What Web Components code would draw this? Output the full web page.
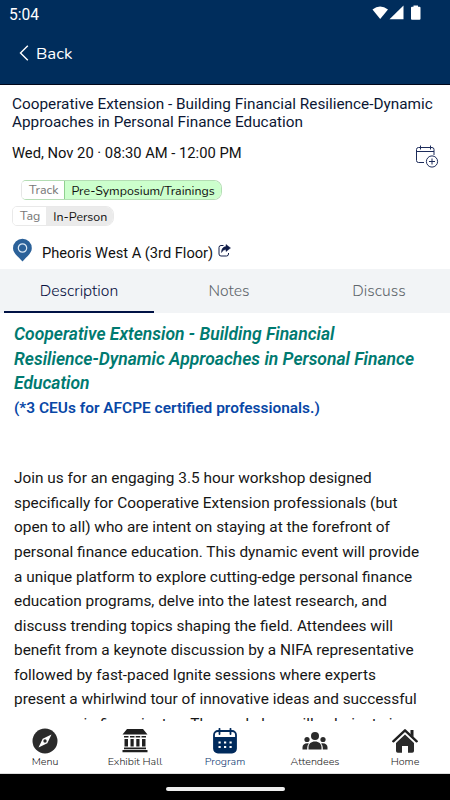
<!DOCTYPE html>
<html lang="en">
<head>
<meta charset="utf-8">
<meta name="viewport" content="width=device-width, initial-scale=1">
<title>Session</title>
<style>
  html, body { margin: 0; height: 100%; background: #fff; }
  body { font-family: Roboto, "Liberation Sans", sans-serif; --navy: #002d5c; --round: Nunito, Lato, sans-serif; }
</style>
</head>
<body>
<session-page></session-page>

<script>
const ICONS = {
  compass: `<svg width="26" height="26" viewBox="0 0 26 26"><circle cx="13" cy="13" r="12.5" fill="#2b2b2b"/><path d="M19.5 6.5 15.3 15.3 6.5 19.5 10.7 10.7Z" fill="#fff"/><circle cx="13" cy="13" r="1.7" fill="#2b2b2b"/></svg>`,
  hall: `<svg width="26" height="26" viewBox="0 0 26 26" fill="#1f1f1f"><path d="M5 1h16L25.5 6.500H.5ZM2 8h4.500v1.500H2ZM8 8h4.500v1.500H8ZM13.700 8h4.500v1.500h-4.500ZM19.500 8H24v1.500h-4.500ZM2.500 11h3.500v7.500H2.500ZM8.500 11h3.200v7.500h-3.200ZM14.300 11h3.200v7.500h-3.200ZM20 11h3.500v7.500h-3.500ZM2 19.500h22v1.700H2ZM.5 22h25v2.300H.5Z"/></svg>`,
  calendar: `<svg width="26" height="26" viewBox="0 0 26 26"><rect x="2" y="3" width="22" height="21.5" rx="4" fill="#fff" stroke="#002a5c" stroke-width="1.800"/><path d="M2 9h22v12a3.500 3.500 0 0 1-3.500 3.500h-15A3.500 3.500 0 0 1 2 21Z" fill="#002a5c"/><path d="M7.500 .8v5.200M18.500 .8v5.200" stroke="#002a5c" stroke-width="1.800" stroke-linecap="round"/><path d="M6.500 14.500h2.200M12 14.500h2.200M17.500 14.500h2.200M6.500 19h2.200M12 19h2.200M17.500 19h2.200" stroke="#fff" stroke-width="2"/></svg>`,
  people: `<svg width="26" height="26" viewBox="0 0 26 26" fill="#2b2b2b"><circle cx="13" cy="8" r="4"/><circle cx="5" cy="11.500" r="2.600"/><circle cx="21" cy="11.500" r="2.600"/><path d="M6.500 21.500v-2.200c0-3.500 2.600-5.800 6.500-5.800s6.500 2.300 6.500 5.800v2.200ZM.5 21.500v-2.200C.5 17 2.200 15.200 5.500 15.200q.8 0 1.400.2Q5.200 17.200 5.200 19.700v1.800ZM25.500 21.500v-2.200c0-2.300-1.700-4.100-5-4.100q-.8 0-1.400.2 1.700 1.800 1.700 4.300v1.800Z"/></svg>`,
  house: `<svg width="26" height="26" viewBox="0 0 26 26"><path d="M1.300 13.300 13 2.300 24.700 13.300" fill="none" stroke="#1f1f1f" stroke-width="2.400" stroke-linecap="round" stroke-linejoin="round"/><path d="M18.500 2H21.500v7l-3-2.800Z" fill="#1f1f1f"/><path d="M13 6.600 22 15v8a1.800 1.800 0 0 1-1.800 1.800H16V18h-6v6.800H5.800A1.800 1.800 0 0 1 4 23v-8Z" fill="#2b2b2b"/></svg>`,
};

function define(name, html) {
  const tpl = document.createElement("template");
  tpl.innerHTML = html;
  customElements.define(name, class extends HTMLElement {
    constructor() {
      super();
      this.attachShadow({ mode: "open" }).appendChild(tpl.content.cloneNode(true));
    }
  });
}

// Status bar and back link
define("app-header", `
  <style>
    :host { display: flex; flex-direction: column; height: 84px; flex: none; background: var(--navy); color: #fff; border-bottom: 1px solid #00061a; }
    .status { display: flex; justify-content: space-between; align-items: center; height: 28px; padding: 0 29px 0 9px; font-size: 15.6px; }
    .status svg { display: block; margin-top: -3px; }
    .status span { margin-top: 1px; }
    .back { display: flex; align-items: center; gap: 7px; height: 50px; padding-left: 19px; font: 400 16.800px var(--round); }
  </style>
  <div class="status">
    <span>5:04</span>
    <svg width="49" height="16" viewBox="0 0 49 16" fill="#fff"><path d="M.5 4.500Q8 -1.500 16 4.500L8.200 14Z"/><path d="M17.500 14.300 31.500.5v13.800Z"/><path d="M41.500.5h4.500v1.300h1.500q1 0 1 1v11q0 1-1 1h-7.500q-1 0-1-1v-11q0-1 1-1h1.500Z"/></svg>
  </div>
  <div class="back">
    <svg width="10" height="16" viewBox="0 0 10 16"><path d="M8.800.8 1.500 8l7.300 7.200" fill="none" stroke="#fff" stroke-width="1.400"/></svg>
    <slot></slot>
  </div>
`);

define("label-chip", `
  <style>
    :host { display: flex; align-items: stretch; width: max-content; box-sizing: border-box; border: 1px solid var(--edge, #e9e9e9); border-radius: 5px 8px 8px 5px; font: 400 12.400px/17px var(--round); overflow: hidden; }
    .key { color: #777; padding: 0 6px 0 7px; background: #fff; }
    .value { background: var(--fill, #ebebeb); color: #111; border: 0 solid var(--line, #ebebeb); border-left-width: 1px; padding: 1px 6px 0; letter-spacing: var(--track, 0); }
  </style>
  <span class="key"><slot name="key"></slot></span><span class="value"><slot></slot></span>
`);

define("session-summary", `
  <style>
    :host { display: block; box-sizing: border-box; height: 184px; flex: none; padding: 10px 11px 0 12px; color: #111; }
    h1 { margin: 0; font-size: 15.340px; line-height: 18px; font-weight: 400; color: #0c1734; white-space: nowrap; }
    .when { display: flex; justify-content: space-between; align-items: center; height: 24px; margin-top: 12px; font-size: 14.740px; }
    .when svg { margin-top: 2px; }
    .when span { margin-top: -4px; }
    .chips { display: flex; flex-direction: column; gap: 6px; margin-top: 13px; }
    .track { --edge: #b4ddb4; --fill: #ccffcc; --line: #8fd08f; margin-left: 9px; border-left-color: #e6e6e6; }
    .where { display: flex; align-items: center; margin-top: 12px; height: 24px; font-size: 14.650px; }
    .where span { margin: 5px 5px 0 10px; }
  </style>
  <h1>Cooperative Extension - Building Financial Resilience-Dynamic<br>Approaches in Personal Finance Education</h1>
  <div class="when">
    <span>Wed, Nov 20 · 08:30 AM - 12:00 PM</span>
    <svg width="24" height="23" viewBox="0 0 24 23" fill="none" stroke="#1c2b5a"><path d="M9 17.500H3.500Q1.500 17.500 1.500 15.500V4.500Q1.500 2.500 3.500 2.500H17q2 0 2 2V10M1.500 6.500H19M5.500 .5v4M15.500 .5v4"/><circle cx="17" cy="16.500" r="5.600" fill="#fff"/><path d="M17 13.500v6M14 16.500h6"/></svg>
  </div>
  <div class="chips">
    <label-chip class="track"><span slot="key">Track</span>Pre-Symposium/Trainings</label-chip>
    <label-chip><span slot="key">Tag</span>In-Person</label-chip>
  </div>
  <div class="where">
    <svg width="20" height="24" viewBox="0 0 20 24"><path d="M10.500.7a9.500 9.500 0 0 1 9.300 9.500c0 5.300-6 9.200-9.300 13.300C7.200 19.400 1 15.500 1 10.200A9.500 9.500 0 0 1 10.500.7Z" fill="#2b6199"/><circle cx="10.500" cy="10" r="4.200" fill="none" stroke="#dce9f5" stroke-width="1.200"/></svg>
    <span>Pheoris West A (3rd Floor)</span>
    <svg width="13" height="13" viewBox="0 0 13 13" fill="none" stroke="#101c48"><path d="M5.500 1.500H3Q1 1.500 1 3.500V10q0 2 2 2H8.500q2 0 2-2V9"/><path d="M8 .5 12.500 4 8 7.500V5.500Q5 5.200 3.500 8.500 3.500 3 8 2.600Z" fill="#101c48" stroke-width=".5"/></svg>
  </div>
`);

define("session-tabs", `
  <style>
    :host { display: flex; flex: none; height: 44px; background: #f2f4f6; padding-left: 4px; font: 300 15.700px/44px var(--round); color: #5f666c; box-sizing: border-box; text-align: center; overflow: hidden; }
    ::slotted(*) { flex: 0 0 150px; height: 44px; box-sizing: border-box; border-bottom: 2px solid transparent; }
    ::slotted([active]) { color: #060f40; border-color: #001245; }
  </style>
  <slot></slot>
`);

define("session-description", `
  <style>
    :host { display: block; flex: 1; min-height: 0; overflow: hidden; padding: 9px 14px 0; font-size: 15.380px; line-height: 24.560px; color: #161616; white-space: nowrap; }
    h2 { margin: 0; font-size: 17.500px; line-height: inherit; font-style: italic; font-weight: 600; color: #007a70; }
    strong { display: block; font-weight: 600; font-size: 15.450px; color: #0847a6; }
    p { margin: 46px 0 0; }
  </style>
  <h2>Cooperative Extension - Building Financial<br>Resilience-Dynamic Approaches in Personal Finance<br>Education</h2>
  <strong>(*3 CEUs for AFCPE certified professionals.)</strong>
  <p>Join us for an engaging 3.5 hour workshop designed<br>specifically for Cooperative Extension professionals (but<br>open to all) who are intent on staying at the forefront of<br>personal finance education. This dynamic event will provide<br>a unique platform to explore cutting-edge personal finance<br>education programs, delve into the latest research, and<br>discuss trending topics shaping the field. Attendees will<br>benefit from a keynote discussion by a NIFA representative<br>followed by fast-paced Ignite sessions where experts<br>present a whirlwind tour of innovative ideas and successful<br>programs in five minutes. The workshop will culminate in</p>
`);

class NavItem extends HTMLElement {
  constructor() {
    super();
    this.attachShadow({ mode: "open" });
  }

  connectedCallback() {
    this.shadowRoot.innerHTML = `
      <style>
        :host { display: flex; flex: 1; flex-direction: column; align-items: center; padding-top: 7px; color: #222; font: 300 10.700px/15px var(--round); }
        :host([active]) { color: #0b3570; }
        svg { display: block; }
      </style>
      ${ICONS[this.getAttribute("icon")]}
      <slot></slot>
    `;
  }
}
customElements.define("nav-item", NavItem);

define("bottom-nav", `
  <style>
    :host { display: block; flex: none; }
    nav { display: flex; height: 52px; background: #fff; border-bottom: 1px solid #ddd; }
    .gesture { display: flex; justify-content: center; align-items: center; height: 26px; background: #000; }
    .gesture i { width: 119px; height: 4px; margin-top: 4px; border-radius: 2px; background: #eee; }
  </style>
  <nav><slot></slot></nav>
  <div class="gesture"><i></i></div>
`);

define("session-page", `
  <style>:host { display: flex; flex-direction: column; height: 800px; width: 450px; overflow: hidden; }</style>
  <app-header>Back</app-header>
  <session-summary></session-summary>
  <session-tabs><span active>Description</span><span>Notes</span><span>Discuss</span></session-tabs>
  <session-description></session-description>
  <bottom-nav>
    <nav-item icon="compass">Menu</nav-item>
    <nav-item icon="hall">Exhibit Hall</nav-item>
    <nav-item icon="calendar" active>Program</nav-item>
    <nav-item icon="people">Attendees</nav-item>
    <nav-item icon="house">Home</nav-item>
  </bottom-nav>
`);
</script>
</body>
</html>
